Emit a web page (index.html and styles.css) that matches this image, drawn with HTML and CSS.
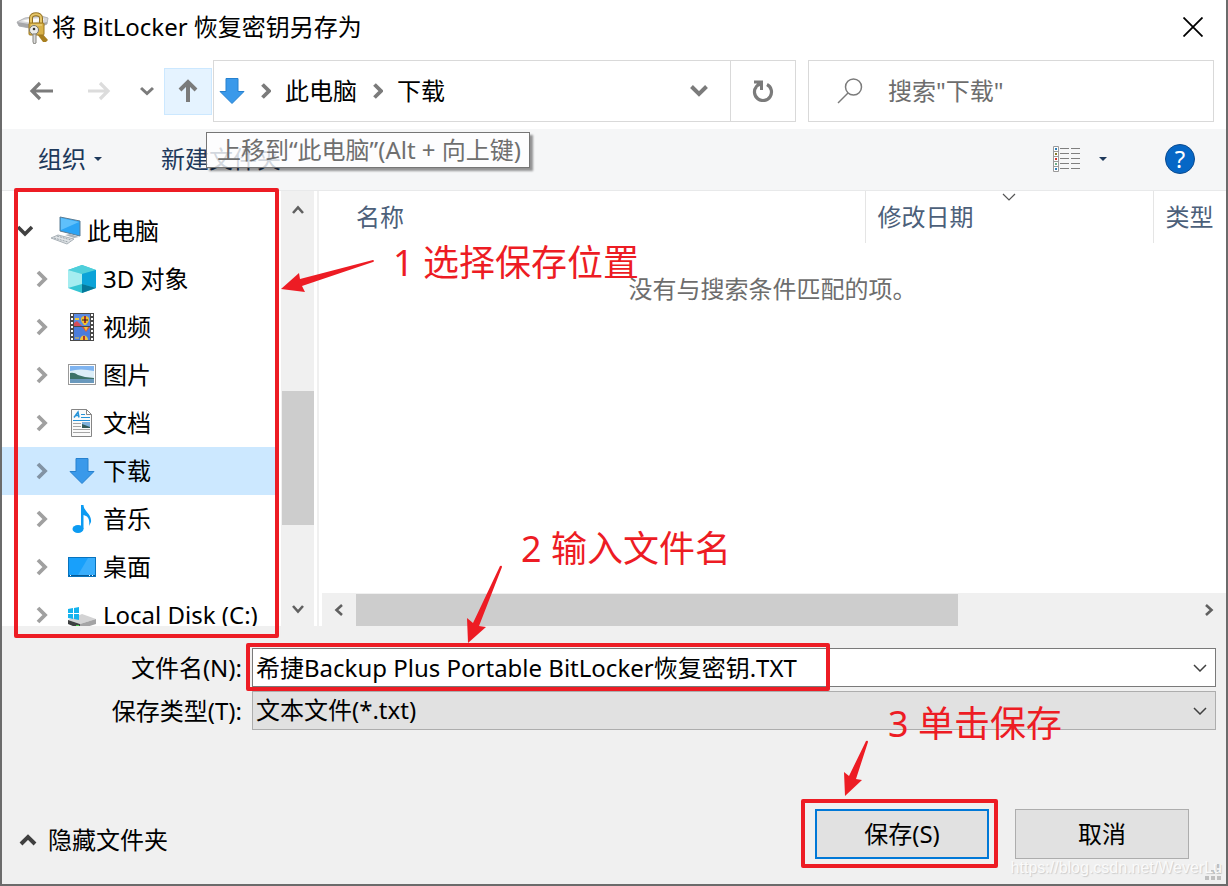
FILE: index.html
```
<!DOCTYPE html>
<html lang="zh-CN">
<head>
    <meta charset="UTF-8">
    <meta name="viewport" content="width=device-width, initial-scale=1.0">
    <title>将 BitLocker 恢复密钥另存为</title>
    <link rel="stylesheet" href="styles.css">
</head>
<body>
    <div class="dialog">
        <!-- Title bar -->
        <header class="title-bar">
            <svg class="title-icon" width="34" height="34" viewBox="0 0 34 34">
                <path d="M2 12 L10 8 L26 6 L33 8 L32 14 L20 19 L4 16 Z" fill="#d5d6d9" stroke="#b3b4b7"/>
                <path d="M2 12 L4 16 L20 19 L32 14 L32 12 L20 15 Z" fill="#a6a7aa"/>
                <path d="M6 11 L14 9 L28 8 L29 10 L18 13 Z" fill="#fafafa"/>
                <path d="M16 14 V8 C16 3 26 3 26 8 V14" fill="none" stroke="#94701f" stroke-width="4"/>
                <path d="M16 14 V8 C16 3 26 3 26 8 V14" fill="none" stroke="#e4c568" stroke-width="2"/>
                <path d="M25 21 L33 30 L31 32 L28 32 L22 24 Z" fill="#a87f20"/>
                <rect x="14" y="13" width="15" height="12" rx="1" fill="#d9b249" stroke="#9c771f"/>
                <path d="M16 15 H27" stroke="#f1da8c"/>
                <circle cx="19" cy="20" r="4.500" fill="#ececea" stroke="#77756c"/>
                <circle cx="19" cy="19" r="1.300" fill="#333"/>
                <path d="M18 24 H21 V33 L19 34 L18 32 Z" fill="#dadada" stroke="#85847e"/>
            </svg>
            <h1>将 BitLocker 恢复密钥另存为</h1>
            <button class="close-btn" aria-label="关闭">
                <svg width="20" height="20" viewBox="0 0 20 20"><path d="M0.5 0.5 L19.5 19.5 M19.5 0.5 L0.5 19.5" stroke="#000" stroke-width="1.8"/></svg>
            </button>
        </header>

        <!-- Navigation bar -->
        <nav class="nav-bar">
            <button class="nav-btn" aria-label="后退">
                <svg width="24" height="20" viewBox="0 0 24 20"><path d="M24 10 H3 M11 2 L3 10 L11 18" fill="none" stroke="#7b7b7b" stroke-width="3.200"/></svg>
            </button>
            <button class="nav-btn forward" aria-label="前进" disabled>
                <svg width="24" height="20" viewBox="0 0 24 20"><path d="M1 10 H21 M13 2 L21 10 L13 18" fill="none" stroke="#dcdcdc" stroke-width="3.200"/></svg>
            </button>
            <button class="recent-btn" aria-label="最近浏览的位置">
                <svg width="14" height="10" viewBox="0 0 14 10"><path d="M1 2 L7 7.500 L13 2" fill="none" stroke="#7b7b7b" stroke-width="3"/></svg>
            </button>
            <button class="up-btn" aria-label="上移">
                <svg width="20" height="24" viewBox="0 0 20 24"><path d="M10 23 V3 M2 11 L10 3 L18 11" fill="none" stroke="#7b7b7b" stroke-width="4"/></svg>
            </button>
            <div class="address">
                <svg width="26" height="26" viewBox="0 0 26 26"><path d="M7 0.5 H19 V13.5 H25 L13 25.5 L1 13.5 H7 Z" fill="#3a99ea" stroke="#2681cf"/></svg>
                <svg class="crumb-arrow" width="10" height="16" viewBox="0 0 10 16"><path d="M1.5 1.5 L8 8 L1.5 14.5" fill="none" stroke="#7b7b7b" stroke-width="3.8"/></svg>
                <a href="#">此电脑</a>
                <svg class="crumb-arrow" width="10" height="16" viewBox="0 0 10 16"><path d="M1.5 1.5 L8 8 L1.5 14.5" fill="none" stroke="#7b7b7b" stroke-width="3.8"/></svg>
                <a href="#">下载</a>
                <button class="address-drop" aria-label="以前的位置">
                    <svg width="18" height="12" viewBox="0 0 18 12"><path d="M1.5 1.5 L9 9 L16.5 1.5" fill="none" stroke="#7b7b7b" stroke-width="4"/></svg>
                </button>
                <button class="refresh-btn" aria-label="刷新">
                    <svg width="22" height="22" viewBox="0 0 22 22"><path d="M15 4.500 A8.500 8.500 0 1 1 4.500 6.500" fill="none" stroke="#7b7b7b" stroke-width="3.2"/><path d="M2 0.500 H11 V10 H8 V6 L4 8 L3 6 L5 3.500 H2 Z" fill="#7b7b7b"/></svg>
                </button>
            </div>
            <label class="search">
                <svg width="26" height="26" viewBox="0 0 26 26"><circle cx="16.500" cy="9" r="8" fill="none" stroke="#7b7b7b" stroke-width="1.500"/><path d="M11 15 L1 25" stroke="#7b7b7b" stroke-width="1.500"/></svg>
                <input type="search" aria-label="搜索" placeholder='搜索"下载"'>
            </label>
        </nav>

        <!-- Command bar -->
        <div class="command-bar">
            <button class="command">组织 <span class="caret"></span></button>
            <button class="command new-folder">新建文件夹</button>
            <button class="command view-btn" aria-label="更改视图">
                <svg width="28" height="26" viewBox="0 0 28 26">
                    <path d="M0.500 0.500 H5.500 V25.500 H0.500 Z M0.500 5.500 H5.500 M0.500 10.500 H5.500 M0.500 15.500 H5.500 M0.500 20.500 H5.500" fill="#fff" stroke="#9a9a9a"/>
                    <path d="M7 2.500 H16 M18 2.500 H27 M7 7.500 H16 M18 7.500 H27 M7 12.500 H16 M18 12.500 H27 M7 17.500 H16 M18 17.500 H27 M7 22.500 H16 M18 22.500 H27" stroke="#7f7f7f"/>
                    <path d="M2 2 h2 v2 h-2 Z M2 22 h2 v2 h-2 Z" fill="#2e7fb8"/>
                    <path d="M2 7 h2 v2 h-2 Z" fill="#8a7a2c"/>
                    <path d="M2 12 h2 v2 h-2 Z" fill="#d0332a"/>
                    <path d="M2 17 h2 v2 h-2 Z" fill="#6fae8a"/>
                </svg>
                <span class="caret"></span>
            </button>
            <button class="help-btn" aria-label="帮助">?</button>
            <div class="tooltip" role="tooltip">上移到“此电脑”(Alt + 向上键)</div>
        </div>

        <!-- Folder tree and file list -->
        <div class="content">
            <aside class="sidebar">
                <ul class="tree">
                    <li class="tree-root">
                        <svg class="expander" width="16" height="12" viewBox="0 0 16 12"><path d="M1 2 L8 9 L15 2" fill="none" stroke="#404040" stroke-width="3.6"/></svg>
                        <svg width="32" height="30" viewBox="0 0 32 30">
                            <path d="M10 1 L30 5 V20 L10 15 Z" fill="#2ba4f5" stroke="#5c7c93"/>
                            <path d="M11 2 L29 6 L11 14 Z" fill="#5fc0fb"/>
                            <path d="M20 18 L26 20 L29 21 L24 22 L15 19 Z" fill="#aab4bb"/>
                            <path d="M1 22 L8 19 L24 23 L17 28 Z" fill="#dfe3e6" stroke="#a9b1b7"/>
                            <path d="M4 22 L18 26 M7 20 L21 24" stroke="#9aa4ab" stroke-dasharray="2 1"/>
                        </svg>
                        <span>此电脑</span>
                    </li>
                    <li>
                        <svg class="expander" width="12" height="18" viewBox="0 0 12 18"><path d="M2 2 L9 9 L2 16" fill="none" stroke="#a0a0a0" stroke-width="3.8"/></svg>
                        <svg width="28" height="28" viewBox="0 0 28 28"><path d="M0 5 L14 0 L28 5 V23 L14 28 L0 23 Z" fill="#35c5d3"/><path d="M0 5 L14 0 L28 5 L14 9 Z" fill="#4fcfdb"/><path d="M0 5 L14 9 V19 L0 23 Z" fill="#a5edf0"/><path d="M14 9 L28 5 V23 L14 19 Z" fill="#0ba3d8"/><path d="M14 19 L28 23 L14 28 Z" fill="#06789a"/></svg>
                        <span>3D 对象</span>
                    </li>
                    <li>
                        <svg class="expander" width="12" height="18" viewBox="0 0 12 18"><path d="M2 2 L9 9 L2 16" fill="none" stroke="#a0a0a0" stroke-width="3.8"/></svg>
                        <svg width="28" height="28" viewBox="0 0 28 28">
                            <rect x="2" width="24" height="28" fill="#4a4a4a"/>
                            <path d="M4 1 V28 M24 1 V28" stroke="#fff" stroke-width="2" stroke-dasharray="2 2"/>
                            <rect x="6" y="1" width="16" height="12" fill="#5b8be2"/><rect x="6" y="14" width="16" height="13" fill="#4a7cdc"/>
                            <path d="M6 10 L9 8 L14 13 H6 Z" fill="#d84c58"/><path d="M7 6 H11" stroke="#efc93e" stroke-width="2"/>
                            <path d="M13 6 C13 2 21 2 21 6 C21 9 19 10 18 12 H16 C15 10 13 9 13 6 Z" fill="#f2c12c"/><path d="M17 3 V10" stroke="#a73524" stroke-width="2"/><path d="M14 7 H20" stroke="#222"/>
                            <path d="M14 14 H22 L18 19 Z" fill="#df5238"/><path d="M16 14 H20 L18 18 Z" fill="#f1c63b"/>
                            <path d="M12 27 C12 21 20 21 20 27 Z" fill="#f1c63b"/><path d="M16 23 V27" stroke="#b23827" stroke-width="2"/><path d="M7 25 H11" stroke="#f1c63b"/>
                        </svg>
                        <span>视频</span>
                    </li>
                    <li>
                        <svg class="expander" width="12" height="18" viewBox="0 0 12 18"><path d="M2 2 L9 9 L2 16" fill="none" stroke="#a0a0a0" stroke-width="3.8"/></svg>
                        <svg width="28" height="22" viewBox="0 0 28 22"><rect x="0.500" y="0.500" width="27" height="20" fill="#fff" stroke="#999"/><rect x="2" y="2" width="24" height="17" fill="#7fb4f0"/><path d="M2 7 Q12 4 26 7 V14 H2 Z" fill="#dceef8"/><path d="M2 9 Q6 8 10 11 L17 13 L26 14 V16 H2 Z" fill="#3c7268"/><path d="M2 15 H26 V19 H2 Z" fill="#6a99bd"/></svg>
                        <span>图片</span>
                    </li>
                    <li>
                        <svg class="expander" width="12" height="18" viewBox="0 0 12 18"><path d="M2 2 L9 9 L2 16" fill="none" stroke="#a0a0a0" stroke-width="3.8"/></svg>
                        <svg width="28" height="28" viewBox="0 0 28 28"><path d="M3.500 0.500 H18.500 L23.500 5.500 V27.500 H3.500 Z M18.500 0.500 V5.500 H23.500" fill="#fafafa" stroke="#858585"/><path d="M6 8.500 L10 3 L11 8.500 M8 6.500 H11" fill="none" stroke="#2492d8" stroke-width="1.500"/><path d="M13 5.500 H17 M13 8.500 H22 M5 11.500 H22" stroke="#2492d8"/><path d="M5 14.500 H13 M5 17.500 H13 M5 20.500 H22 M5 23.500 H22" stroke="#a5a5a5"/><rect x="14" y="13" width="8" height="6" fill="#7fb2dd"/><path d="M14 15 L22 18 V19 H14 Z" fill="#315a58"/></svg>
                        <span>文档</span>
                    </li>
                    <li class="selected">
                        <svg class="expander" width="12" height="18" viewBox="0 0 12 18"><path d="M2 2 L9 9 L2 16" fill="none" stroke="#8293a4" stroke-width="3.8"/></svg>
                        <svg width="28" height="26" viewBox="0 0 28 26"><path d="M8 0.500 H20 V13.500 H26 L14 25.500 L2 13.500 H8 Z" fill="#3a99ea" stroke="#2681cf"/></svg>
                        <span>下载</span>
                    </li>
                    <li>
                        <svg class="expander" width="12" height="18" viewBox="0 0 12 18"><path d="M2 2 L9 9 L2 16" fill="none" stroke="#a0a0a0" stroke-width="3.8"/></svg>
                        <svg width="28" height="28" viewBox="0 0 28 28"><ellipse cx="10" cy="24" rx="5.500" ry="4" fill="#0c9bf2"/><path d="M13 0 H15.500 C16 7 24 9 23 17 L21 21 C22 14 20 11 15.500 10 V24 H13 Z" fill="#0c9bf2"/></svg>
                        <span>音乐</span>
                    </li>
                    <li>
                        <svg class="expander" width="12" height="18" viewBox="0 0 12 18"><path d="M2 2 L9 9 L2 16" fill="none" stroke="#a0a0a0" stroke-width="3.8"/></svg>
                        <svg width="28" height="20" viewBox="0 0 28 20"><rect x="0.500" y="0.500" width="27" height="19" fill="#18a0fb" stroke="#0873bd"/><path d="M10 18 L20 1 H27 V18 Z" fill="#3aaefc"/><path d="M1 18.500 H27" stroke="#075a96"/><path d="M2 18.500 H3 M21 18.500 H22 M24 18.500 H25" stroke="#fff"/></svg>
                        <span>桌面</span>
                    </li>
                    <li>
                        <svg class="expander" width="12" height="18" viewBox="0 0 12 18"><path d="M2 2 L9 9 L2 16" fill="none" stroke="#a0a0a0" stroke-width="3.8"/></svg>
                        <svg width="28" height="28" viewBox="0 0 28 28"><path d="M0 19 L14 13 L28 18 L12 23 Z" fill="#d3d3d4"/><path d="M12 23 L28 18 V23 L12 28 Z" fill="#a4a4a5"/><path d="M0 19 L12 23 V28 L0 23 Z" fill="#3d3f40"/><path d="M8 24 h3 v2 h-3 Z" fill="#49c849"/><path d="M0 8 L5 7 V12 H0 Z M6 7 L11 6 V12 H6 Z M0 13 H5 V18 L0 17 Z M6 13 H11 V19 L6 18 Z" fill="#14b3ee"/></svg>
                        <span>Local Disk (C:)</span>
                    </li>
                </ul>
                <div class="scroll-v">
                    <svg width="12" height="10" viewBox="0 0 12 10"><path d="M1 8 L6 2.500 L11 8" fill="none" stroke="#606060" stroke-width="2.600"/></svg>
                    <div class="thumb"></div>
                    <svg width="12" height="10" viewBox="0 0 12 10"><path d="M1 2 L6 7.500 L11 2" fill="none" stroke="#606060" stroke-width="2.600"/></svg>
                </div>
                <div class="mark tree-mark"></div>
            </aside>

            <main class="files">
                <table>
                    <thead>
                        <tr>
                            <th class="col-name">名称</th>
                            <th class="col-date">修改日期
                                <svg class="sort" width="14" height="8" viewBox="0 0 14 8"><path d="M1 1 L7 7 L13 1" fill="none" stroke="#555" stroke-width="1.200"/></svg>
                            </th>
                            <th class="col-type">类型</th>
                        </tr>
                    </thead>
                </table>
                <p class="empty">没有与搜索条件匹配的项。</p>
                <div class="scroll-h">
                    <svg width="10" height="12" viewBox="0 0 10 12"><path d="M8 1 L2.500 6 L8 11" fill="none" stroke="#606060" stroke-width="2.600"/></svg>
                    <div class="track"><div class="thumb"></div></div>
                    <svg width="10" height="12" viewBox="0 0 10 12"><path d="M2 1 L7.500 6 L2 11" fill="none" stroke="#606060" stroke-width="2.600"/></svg>
                </div>
            </main>

            <div class="note note-1">1 选择保存位置</div>
            <svg class="arrow arrow-1" width="96" height="36" viewBox="0 0 96 36"><path d="M93 1 Q95 2 93 3 L22 27 L25 33 L1 30 L19 14 L20 20 Z" fill="#ed1c24"/></svg>
            <div class="note note-2">2 输入文件名</div>
            <svg class="arrow arrow-2" width="40" height="80" viewBox="0 0 40 80"><path d="M35 1 Q37 0 37 2 L14 61 L21 62 L3 78 L2 53 L8 58 Z" fill="#ed1c24"/></svg>
        </div>

        <!-- File name and type -->
        <form class="fields">
            <label for="fileName">文件名(N):</label>
            <div class="field">
                <input type="text" id="fileName" value="希捷Backup Plus Portable BitLocker恢复密钥.TXT">
                <svg class="field-arrow" width="14" height="8" viewBox="0 0 14 8"><path d="M1 1 L7 7 L13 1" fill="none" stroke="#404040" stroke-width="1.500"/></svg>
                <div class="mark name-mark"></div>
            </div>
            <label for="fileType">保存类型(T):</label>
            <div class="field">
                <select id="fileType">
                    <option>文本文件(*.txt)</option>
                </select>
                <svg class="field-arrow" width="14" height="8" viewBox="0 0 14 8"><path d="M1 1 L7 7 L13 1" fill="none" stroke="#404040" stroke-width="1.500"/></svg>
            </div>
        </form>

        <!-- Bottom buttons -->
        <footer class="footer">
            <button class="hide-btn">
                <svg width="18" height="12" viewBox="0 0 18 12"><path d="M2 10 L9 3 L16 10" fill="none" stroke="#404040" stroke-width="4"/></svg>
                隐藏文件夹
            </button>
            <div class="save-box">
                <button class="push save">保存(S)</button>
                <div class="mark save-mark"></div>
                <div class="note note-3">3 单击保存</div>
                <svg class="arrow arrow-3" width="28" height="58" viewBox="0 0 28 58"><path d="M24 1 Q26 0 26 2 L14 39 L20 40 L3 56 L2 32 L7 36 Z" fill="#ed1c24"/></svg>
            </div>
            <button class="push">取消</button>
            <svg class="grip" width="16" height="16" viewBox="0 0 16 16"><path d="M12 0 h4 v4 h-4 Z M6 6 h4 v4 h-4 Z M12 6 h4 v4 h-4 Z M0 12 h4 v4 h-4 Z M6 12 h4 v4 h-4 Z M12 12 h4 v4 h-4 Z" fill="#bfbfbf"/></svg>
            <span class="watermark">https://blog.csdn.net/WeverLu</span>
        </footer>
    </div>
</body>
</html>
```
FILE: styles.css
```
* {
    box-sizing: border-box;
}

body {
    margin: 0;
    font-family: "Noto Sans", "Noto Sans CJK SC", sans-serif;
    font-size: 24px;
    line-height: 32px;
    color: #000;
}

button, input, select {
    font: inherit;
    color: inherit;
    border: none;
    background: none;
    padding: 0;
    margin: 0;
}

svg {
    display: block;
    flex: none;
}

a {
    color: inherit;
    text-decoration: none;
}

.dialog {
    display: flex;
    flex-direction: column;
    height: 100vh;
    min-height: 700px;
    background-color: #f0f0f0;
    border: solid 2px #6b6b6b;
    border-top: none;
    overflow: hidden;
}

/* Title bar */
.title-bar {
    display: flex;
    align-items: center;
    height: 53px;
    padding: 0 23px 0 13px;
    background-color: #fff;
}

.title-bar h1 {
    flex: 1;
    margin: 0 0 0 3px;
    font-size: 24px;
    font-weight: normal;
}

/* Navigation bar */
.nav-bar {
    display: flex;
    align-items: center;
    height: 76px;
    padding: 0 12px 0 27px;
    background-color: #fff;
}

.forward {
    margin-left: 34px;
}

.recent-btn {
    margin: 0 10px 0 29px;
}

.up-btn {
    display: flex;
    align-items: center;
    justify-content: center;
    width: 48px;
    height: 47px;
    margin-right: 1px;
    background-color: #e5f3ff;
    border: solid 1px #cce8ff;
}

.address {
    display: flex;
    align-items: center;
    flex: 1;
    height: 62px;
    padding-left: 5px;
    border: solid 1px #d9d9d9;
}

.crumb-arrow {
    margin: 0 14px 0 16px;
}

.address-drop {
    margin: 0 22px 0 auto;
}

.refresh-btn {
    display: flex;
    align-items: center;
    justify-content: center;
    width: 65px;
    height: 60px;
    border-left: solid 1px #d9d9d9;
}

.search {
    display: flex;
    align-items: center;
    width: 406px;
    height: 62px;
    margin-left: 12px;
    padding-left: 28px;
    border: solid 1px #d9d9d9;
}

.search input {
    flex: 1;
    min-width: 0;
    margin-left: 25px;
    outline: none;
}

.search input::placeholder {
    color: #6d6d6d;
    opacity: 1;
}

/* Command bar */
.command-bar {
    position: relative;
    display: flex;
    align-items: center;
    height: 62px;
    padding: 0 31px 2px 36px;
    background-color: #f5f6f7;
    border-bottom: solid 1px #e8e9ea;
    color: #1e395b;
}

.command {
    display: flex;
    align-items: center;
}

.caret {
    margin-left: 8px;
    border: solid 4px transparent;
    border-top-color: #1e395b;
    border-bottom: none;
}

.new-folder {
    margin-left: 59px;
}

.view-btn {
    margin: 0 58px 0 auto;
}

.view-btn .caret {
    margin-left: 18px;
}

.help-btn {
    width: 30px;
    height: 30px;
    border: solid 1px #0b4b8f;
    border-radius: 50%;
    background-color: #0667c6;
    color: #fff;
    line-height: 28px;
}

.tooltip {
    position: absolute;
    left: 204px;
    top: 3px;
    padding: 0 8px 0 10px;
    border: solid 1px #767676;
    background-color: rgba(255, 255, 255, 0.8);
    box-shadow: 3px 3px 2px rgba(0, 0, 0, 0.4);
    color: #6f6f6f;
    line-height: 34px;
    white-space: nowrap;
}

/* Folder tree */
.content {
    position: relative;
    display: flex;
    flex: 1;
    min-height: 0;
    background-color: #fff;
}

.sidebar {
    position: relative;
    display: flex;
    width: 312px;
}

.tree {
    flex: 1;
    margin: 0;
    padding: 16px 5px 0 0;
    list-style: none;
    overflow: hidden;
    white-space: nowrap;
}

.tree li {
    display: flex;
    align-items: center;
    height: 48px;
    padding-left: 34px;
}

.expander {
    margin-right: 20px;
}

.tree span {
    margin-left: 7px;
}

.tree .tree-root {
    padding-left: 15px;
}

.tree-root .expander {
    margin-right: 17px;
}

.tree-root span {
    margin-left: 5px;
}

.tree .selected {
    background-color: #cce8ff;
}

.scroll-v {
    display: flex;
    flex-direction: column;
    align-items: center;
    width: 33px;
    padding: 14px 0 12px;
    background-color: #f0f0f0;
}

.thumb {
    background-color: #cdcdcd;
}

.scroll-v .thumb {
    width: 32px;
    height: 134px;
    margin: auto 0 79px;
}

/* File list */
.files {
    display: flex;
    flex-direction: column;
    flex: 1;
    min-width: 0;
    margin-left: 3px;
    border-left: solid 2px #f0f0f0;
}

.files table {
    width: 100%;
    border-collapse: collapse;
    table-layout: fixed;
    color: #4c607a;
}

.files th {
    position: relative;
    height: 52px;
    padding: 0 0 0 12px;
    border-left: solid 1px #e5e5e5;
    font-weight: normal;
    text-align: left;
    white-space: nowrap;
}

.files .col-name {
    padding-left: 37px;
    border-left: none;
}

.col-date {
    width: 288px;
}

.col-type {
    width: 73px;
}

.sort {
    position: absolute;
    left: 50%;
    top: 2px;
    margin-left: -7px;
}

.empty {
    flex: 1;
    margin: 0;
    padding: 30px 0 0 0;
    color: #6d6d6d;
    text-align: center;
}

.scroll-h {
    display: flex;
    align-items: center;
    height: 33px;
    margin-left: 3px;
    padding: 0 12px;
    background-color: #f0f0f0;
}

.scroll-h .track {
    flex: 1;
    margin: 0 12px;
}

.scroll-h .thumb {
    width: 72%;
    height: 32px;
}

/* Fields */
.fields {
    display: grid;
    grid-template-columns: 240px 1fr;
    align-items: center;
    column-gap: 10px;
    row-gap: 4px;
    padding: 22px 10px 0 0;
}

.fields label {
    text-align: right;
}

.field {
    position: relative;
}

.field input, .field select {
    display: block;
    width: 100%;
    height: 39px;
    padding: 0 40px 2px 3px;
    border: solid 1px #7a7a7a;
    background-color: #fff;
    outline: none;
    appearance: none;
}

.field select {
    border-color: #adadad;
    background-color: #e1e1e1;
}

.field-arrow {
    position: absolute;
    right: 9px;
    top: 16px;
}

/* Bottom buttons */
.footer {
    position: relative;
    display: flex;
    align-items: center;
    height: 154px;
    padding: 54px 37px 0 17px;
}

.hide-btn {
    display: flex;
    align-items: center;
    gap: 11px;
    margin-top: 11px;
    margin-right: auto;
}

.save-box {
    position: relative;
    margin-right: 26px;
}

.push {
    display: block;
    width: 174px;
    height: 50px;
    border: solid 1px #adadad;
    background-color: #e1e1e1;
}

.push.save {
    border: solid 2px #0078d7;
}

.watermark {
    position: absolute;
    right: 4px;
    bottom: 6px;
    color: #fafafa;
    font-family: "Liberation Sans", sans-serif;
    font-size: 16px;
    line-height: 20px;
    text-shadow: 1px 1px 1px #ccc;
}

.grip {
    position: absolute;
    right: 5px;
    bottom: 4px;
}

/* Red marks */
.mark {
    position: absolute;
    border: solid 4px #ed1c24;
    border-radius: 2px;
    pointer-events: none;
}

.tree-mark {
    left: 12px;
    top: -3px;
    bottom: -12px;
    width: 265px;
    z-index: 1;
}

.name-mark {
    left: -6px;
    top: -5px;
    bottom: -4px;
    width: 584px;
    z-index: 1;
}

.save-mark {
    left: -14px;
    right: -9px;
    top: -10px;
    bottom: -9px;
}

.note {
    position: absolute;
    color: #ed1c24;
    font-size: 36px;
    line-height: 48px;
    white-space: nowrap;
    pointer-events: none;
}

.arrow {
    position: absolute;
    pointer-events: none;
    z-index: 1;
}

.note-1 {
    left: 391px;
    top: 48px;
}

.arrow-1 {
    left: 278px;
    top: 68px;
}

.note-2 {
    left: 519px;
    bottom: 53px;
}

.arrow-2 {
    left: 463px;
    bottom: -19px;
}

.note-3 {
    left: 73px;
    top: -109px;
}

.arrow-3 {
    left: 27px;
    top: -69px;
}
```
